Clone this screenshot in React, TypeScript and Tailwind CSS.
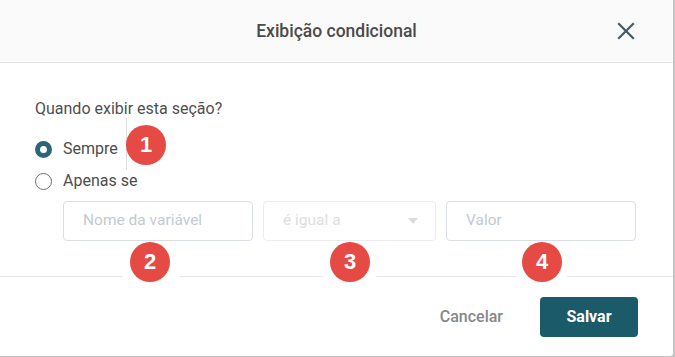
import React from "react";

function Badge({ n, className }: { n: string; className: string }) {
  return (
    <div
      className={
        "absolute flex h-[40px] w-[40px] items-center justify-center rounded-full bg-[#e64a45] text-[22px] font-bold leading-none text-white " +
        className
      }
      style={{ fontFamily: '"Liberation Sans", Arial, sans-serif' }}
    >
      {n}
    </div>
  );
}

export default function App() {
  return (
    <div
      className="relative h-[357px] w-[675px] overflow-hidden bg-[#c4c4c4]"
      style={{ fontFamily: 'Roboto, "Noto Sans", sans-serif' }}
    >
      <div className="flex h-[356px] w-[673px] flex-col overflow-hidden rounded-br-[3px] bg-white">
        {/* header */}
        <div className="relative flex h-[63px] shrink-0 items-center justify-center border-b border-[#e6e6e6] bg-[#fafafa]">
          <span className="text-[17.5px] font-medium text-[#4a4a4a]">Exibição condicional</span>
          <button className="absolute right-[37px] top-[21px] text-[#455a64]">
            <svg width="20" height="20" viewBox="0 0 20 20" fill="none" stroke="currentColor" strokeWidth="2.2" strokeLinecap="square">
              <path d="M3 3 L17 17 M17 3 L3 17" />
            </svg>
          </button>
        </div>
        {/* body */}
        <div className="flex h-[214px] shrink-0 flex-col border-b border-[#e6e6e6] px-[35px] pt-[36px]">
          <div className="text-[16px] leading-[20px] text-[#4f4f4f]">Quando exibir esta seção?</div>
          <div className="mt-[14px] flex h-[32px] items-center gap-[11px]">
            <span className="h-[17px] w-[17px] rounded-full border-[5px] border-[#2b6676] bg-white" />
            <span className="text-[16px] text-[#4d4d4d]">Sempre</span>
          </div>
          <div className="flex h-[32px] items-center gap-[11px]">
            <span className="h-[17px] w-[17px] rounded-full border border-[#66727b] bg-white" />
            <span className="text-[16px] text-[#4d4d4d]">Apenas se</span>
          </div>
          <div className="ml-[28px] mt-[4px] flex gap-[10px]">
            <div className="flex h-[40px] w-[190px] items-center rounded-[4px] border border-[#d9dfe4] px-[19px] text-[15.5px] text-[#c4cad0]">
              Nome da variável
            </div>
            <div className="flex h-[40px] w-[173px] items-center justify-between rounded-[4px] border border-[#ededed] pl-[19px] pr-[17px] text-[15.5px] text-[#dedede]">
              <span>é igual a</span>
              <svg width="10" height="6" viewBox="0 0 10 6">
                <path d="M0 0 L10 0 L5 6 Z" fill="#dcdcdc" />
              </svg>
            </div>
            <div className="flex h-[40px] w-[190px] items-center rounded-[4px] border border-[#d9dfe4] px-[19px] text-[15.5px] text-[#c4cad0]">
              Valor
            </div>
          </div>
        </div>
        {/* footer */}
        <div className="flex flex-1 items-center justify-end gap-[37px] pr-[35px]">
          <button className="text-[16px] font-medium text-[#878787]">Cancelar</button>
          <button className="h-[40px] w-[98px] rounded-[4px] bg-[#1b5a69] text-[16px] font-bold text-white">
            Salvar
          </button>
        </div>
      </div>

      {/* overlays */}
      <div className="absolute left-[126px] top-[118px] h-[52px] w-px bg-[#dcdcdc]" />
      <div className="absolute left-[122px] top-[276px] h-[3px] w-[58px] bg-white" />
      <div className="absolute left-[323px] top-[276px] h-[3px] w-[53px] bg-white" />
      <div className="absolute left-[516px] top-[276px] h-[3px] w-[51px] bg-white" />
      <Badge n="1" className="left-[126px] top-[125px]" />
      <Badge n="2" className="left-[130px] top-[242px]" />
      <Badge n="3" className="left-[330px] top-[242px]" />
      <Badge n="4" className="left-[522px] top-[242px]" />
    </div>
  );
}
